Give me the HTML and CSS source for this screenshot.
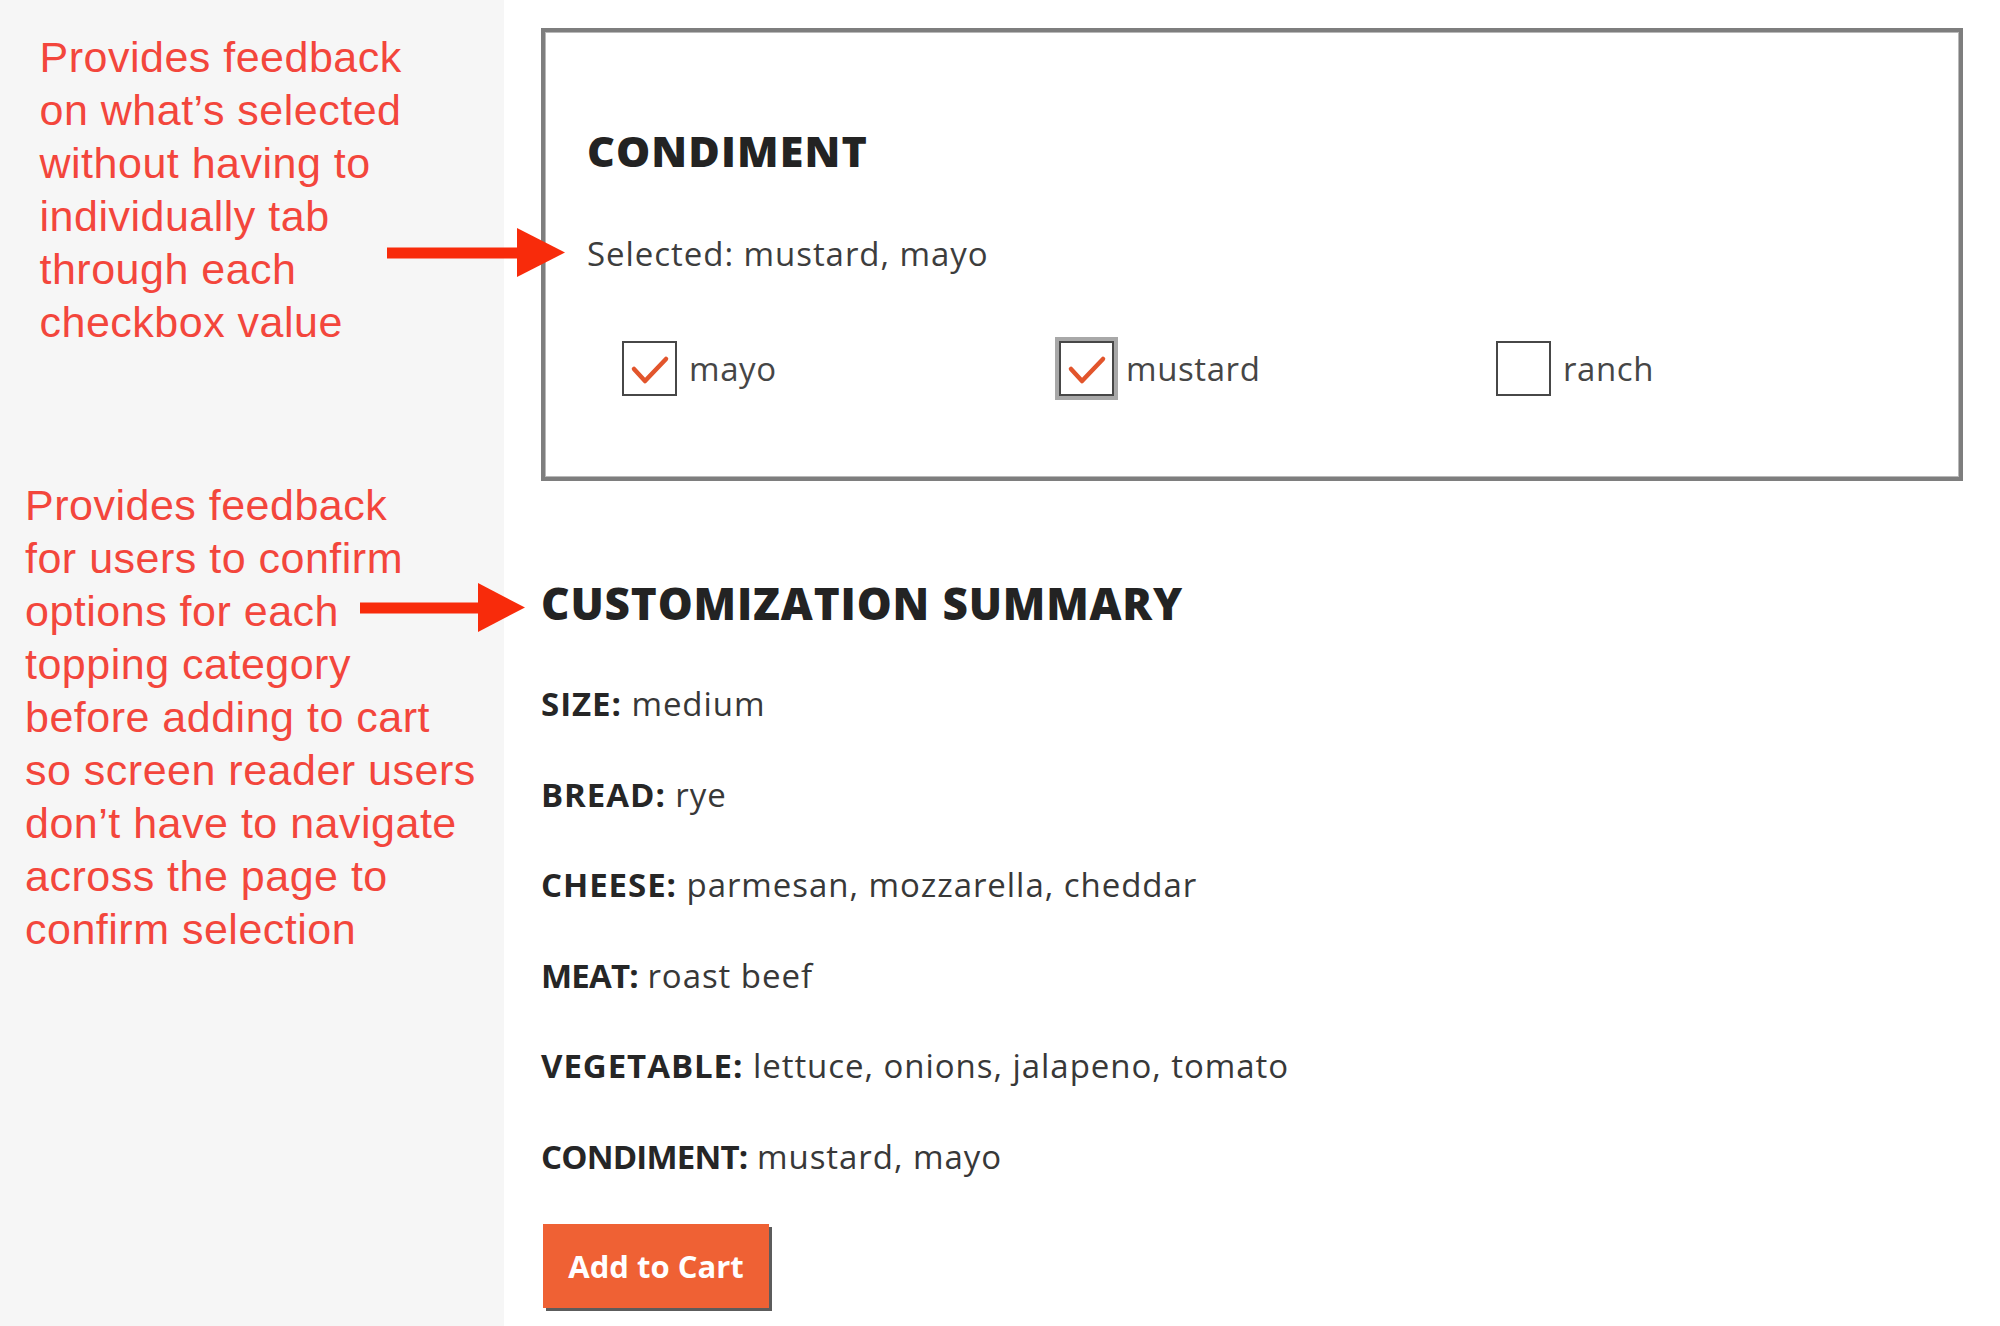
FILE: index.html
```html
<!DOCTYPE html>
<html lang="en">
<head>
<meta charset="utf-8">
<title>Condiment customization</title>
<link rel="stylesheet" href="styles.css">
</head>
<body>
<div class="page">
  <aside class="notes">
    <p class="note note-one">Provides feedback<br>on what’s selected<br>without having to<br>individually tab<br>through each<br>checkbox value</p>
    <p class="note note-two">Provides feedback<br>for users to confirm<br>options for each<br>topping category<br>before adding to cart<br>so screen reader users<br>don’t have to navigate<br>across the page to<br>confirm selection</p>
  </aside>
  <main class="main">
    <section class="group">
      <h2 class="group-title">CONDIMENT</h2>
      <p class="selected">Selected: mustard, mayo</p>
      <div class="options">
        <label class="option">
          <span class="box"><svg viewBox="0 0 55 55" width="55" height="55"><polyline points="12,28 23,40 44,18" /></svg></span>
          <span class="option-label">mayo</span>
        </label>
        <label class="option">
          <span class="box focused"><svg viewBox="0 0 55 55" width="55" height="55"><polyline points="12,28 23,40 44,18" /></svg></span>
          <span class="option-label">mustard</span>
        </label>
        <label class="option">
          <span class="box"></span>
          <span class="option-label">ranch</span>
        </label>
      </div>
    </section>
    <section class="summary">
      <h2 class="summary-title">CUSTOMIZATION SUMMARY</h2>
      <ul class="rows">
        <li><b>SIZE:</b> medium</li>
        <li><b>BREAD:</b> rye</li>
        <li><b>CHEESE:</b> parmesan, mozzarella, cheddar</li>
        <li><b class="label-wide">MEAT:</b> roast beef</li>
        <li><b>VEGETABLE:</b> lettuce, onions, jalapeno, tomato</li>
        <li><b class="label-wide">CONDIMENT:</b> mustard, mayo</li>
      </ul>
      <button class="cart" type="button">Add to Cart</button>
    </section>
  </main>
  <svg class="arrow arrow-one" width="180" height="50" viewBox="0 0 180 50"><rect x="0" y="19.5" width="132" height="11"/><polygon points="130,0 178,24.5 130,49"/></svg>
  <svg class="arrow arrow-two" width="168" height="50" viewBox="0 0 168 50"><rect x="0" y="19.5" width="120" height="11"/><polygon points="118,0 165,24.5 118,49"/></svg>
</div>
</body>
</html>
```
FILE: styles.css
```css
* { box-sizing: border-box; }
html, body { margin: 0; padding: 0; background: #ffffff; }
.page {
  position: relative;
  display: grid;
  grid-template-columns: 504px 1fr;
  width: 2000px;
  height: 1326px;
  overflow: hidden;
}
.notes {
  background: #f6f6f6;
  height: 1326px;
  font-family: "Liberation Sans", Arial, sans-serif;
  color: #f3463c;
  font-size: 43px;
  line-height: 53px;
  letter-spacing: 0.5px;
}
.note { margin: 0; }
.note-one { padding: 31px 0 0 39.5px; }
.note-two { padding: 130px 0 0 25px; }

.main {
  padding: 28px 36px 0 37px;
  font-family: "Open Sans", "Noto Sans", sans-serif;
}
.group {
  border: 4px solid #7e7e7e;
  box-shadow: inset 0 0 0 1px #b9b9b9;
  height: 453px;
  width: 1422px;
  padding: 94px 0 0 42px;
}
.group-title, .summary-title {
  margin: 0;
  font-family: "Open Sans", "Noto Sans", sans-serif;
  font-weight: 800;
  font-size: 43px;
  line-height: 50px;
  letter-spacing: 1.1px;
  color: #232323;
}
.selected {
  margin: 58px 0 0 0;
  font-size: 33px;
  line-height: 40px;
  letter-spacing: 0.95px;
  color: #3d3d3d;
}
.options {
  display: flex;
  margin-top: 67px;
  padding-left: 35px;
}
.option {
  display: flex;
  align-items: center;
  width: 437px;
  flex: none;
}
.box {
  width: 55px;
  height: 55px;
  border: 2.5px solid #474747;
  background: #fff;
  position: relative;
  flex: none;
}
.box svg {
  position: absolute;
  left: -2.5px;
  top: -2.5px;
}
.box polyline {
  fill: none;
  stroke: #e2552c;
  stroke-width: 4.5;
  stroke-linecap: round;
  stroke-linejoin: round;
}
.box.focused { box-shadow: 0 0 0 4px #a8a8a8; }
.option-label {
  margin-left: 12px;
  font-size: 33px;
  line-height: 40px;
  letter-spacing: 0.6px;
  color: #464646;
}

.summary { padding-top: 97px; }
.summary-title { font-size: 44px; letter-spacing: 0.85px; }
.rows {
  list-style: none;
  margin: 56px 0 0 0;
  padding: 0;
  display: flex;
  flex-direction: column;
  gap: 50.6px;
}
.rows li {
  font-size: 33px;
  line-height: 40px;
  letter-spacing: 0.95px;
  color: #383838;
}
.rows b { font-weight: 700; color: #262626; }
.rows b.label-wide { letter-spacing: -0.8px; }
.cart {
  display: block;
  margin: 47px 0 0 2px;
  width: 226px;
  height: 84px;
  padding: 0;
  border: none;
  background: #ef6134;
  box-shadow: 3px 3px 0 0 #5c5c5c;
  color: #ffffff;
  font-family: "Open Sans", "Noto Sans", sans-serif;
  font-weight: 700;
  font-size: 31px;
  line-height: 84px;
}

.arrow { position: absolute; fill: #f82b0b; }
.arrow-one { left: 387px; top: 228px; }
.arrow-two { left: 360px; top: 583px; }
```
